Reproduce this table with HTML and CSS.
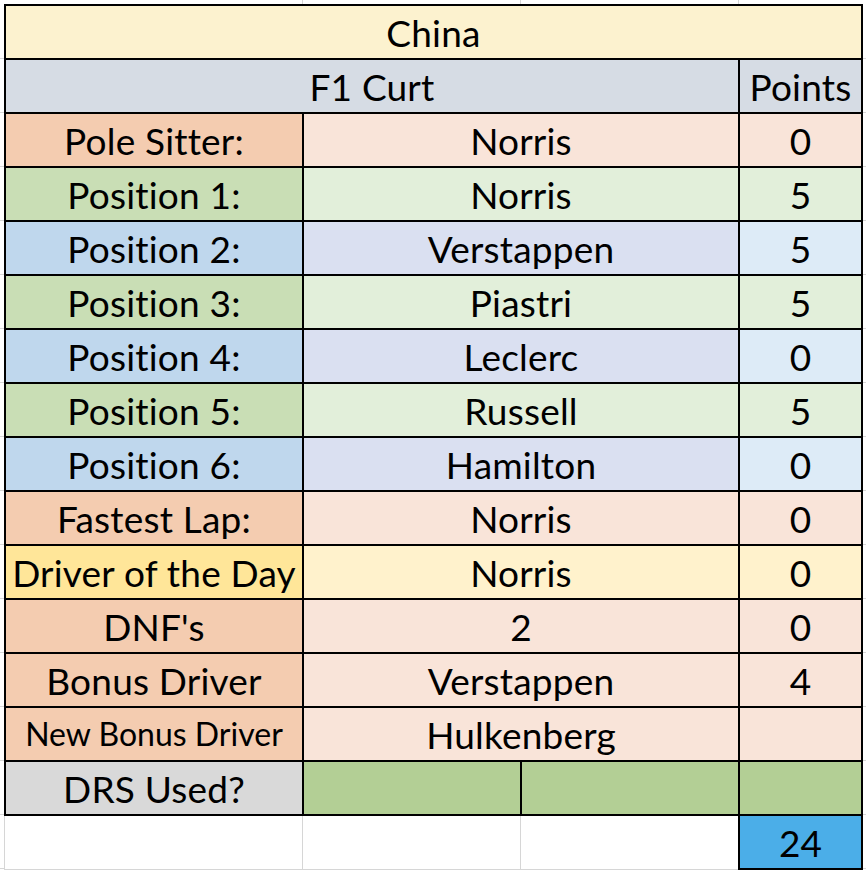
FILE: index.html
```html
<!DOCTYPE html>
<html lang="en">
<head>
<meta charset="utf-8">
<title>China - F1 Curt</title>
<link rel="stylesheet" href="styles.css">
</head>
<body>
<div class="sheet">
  <div class="board">
    <div class="cell title span4">China</div>
    <div class="cell head span3">F1 Curt</div>
    <div class="cell head">Points</div>

    <div class="cell peach-l">Pole Sitter:</div>
    <div class="cell peach-v span2">Norris</div>
    <div class="cell peach-v">0</div>

    <div class="cell green-l">Position 1:</div>
    <div class="cell green-v span2">Norris</div>
    <div class="cell green-v">5</div>

    <div class="cell blue-l">Position 2:</div>
    <div class="cell blue-v span2">Verstappen</div>
    <div class="cell blue-p">5</div>

    <div class="cell green-l">Position 3:</div>
    <div class="cell green-v span2">Piastri</div>
    <div class="cell green-v">5</div>

    <div class="cell blue-l">Position 4:</div>
    <div class="cell blue-v span2">Leclerc</div>
    <div class="cell blue-p">0</div>

    <div class="cell green-l">Position 5:</div>
    <div class="cell green-v span2">Russell</div>
    <div class="cell green-v">5</div>

    <div class="cell blue-l">Position 6:</div>
    <div class="cell blue-v span2">Hamilton</div>
    <div class="cell blue-p">0</div>

    <div class="cell peach-l">Fastest Lap:</div>
    <div class="cell peach-v span2">Norris</div>
    <div class="cell peach-v">0</div>

    <div class="cell gold-l">Driver of the Day</div>
    <div class="cell gold-v span2">Norris</div>
    <div class="cell gold-v">0</div>

    <div class="cell peach-l">DNF's</div>
    <div class="cell peach-v span2">2</div>
    <div class="cell peach-v">0</div>

    <div class="cell peach-l">Bonus Driver</div>
    <div class="cell peach-v span2">Verstappen</div>
    <div class="cell peach-v">4</div>

    <div class="cell peach-l small">New Bonus Driver</div>
    <div class="cell peach-v span2">Hulkenberg</div>
    <div class="cell peach-v"></div>

    <div class="cell gray-l">DRS Used?</div>
    <div class="cell drs"></div>
    <div class="cell drs"></div>
    <div class="cell drs"></div>
  </div>
  <div class="total-row">
    <div class="blank blank-a"></div>
    <div class="blank blank-b"></div>
    <div class="blank blank-c"></div>
    <div class="total">24</div>
  </div>
</div>
</body>
</html>
```

FILE: styles.css
```css
html, body {
  margin: 0;
  padding: 0;
}

body {
  width: 866px;
  height: 872px;
  background-color: #ffffff;
  background-image:
    linear-gradient(to right, transparent 0 302px, #d6d6d6 302px 303px, transparent 303px 520px, #d6d6d6 520px 521px, transparent 521px 738px, #d6d6d6 738px 739px, transparent 739px),
    repeating-linear-gradient(to bottom, transparent 0 53px, #d6d6d6 53px 54px);
  background-size: 100% 4px, 100% 100%;
  background-repeat: no-repeat, repeat;
  background-position: 0 0, 0 5px;
  font-family: Lato, "Open Sans", "Liberation Sans", sans-serif;
  font-variant-ligatures: none;
  color: #000;
  overflow: hidden;
}

.sheet {
  padding: 4px 0 0 4px;
}

.board {
  display: grid;
  grid-template-columns: 296px 216px 216px 121px;
  grid-auto-rows: 52px;
  gap: 2px;
  padding: 2px;
  background: #000;
  width: max-content;
}

.cell {
  display: flex;
  align-items: center;
  justify-content: center;
  font-size: 37px;
  letter-spacing: 0.2px;
  line-height: 1;
  white-space: nowrap;
  box-sizing: border-box;
  overflow: visible;
}

.span2 { grid-column: span 2; }
.span3 { grid-column: span 3; }
.span4 { grid-column: span 4; }

.small { font-size: 32px; letter-spacing: 0; }

.title { background: #fcf2cf; }
.head { background: #d6dce4; }

.peach-l { background: #f4ccb0; }
.peach-v { background: #f9e4d9; }

.green-l { background: #c9deb5; }
.green-v { background: #e2efda; }

.blue-l { background: #bfd7ed; }
.blue-v { background: #dae0f1; }
.blue-p { background: #ddebf7; }

.gold-l { background: #ffe699; }
.gold-v { background: #fff2cc; }

.gray-l { background: #d9d9d9; }
.drs { background: #b3cf95; }

.total-row {
  display: flex;
  height: 54px;
}

.blank {
  box-sizing: border-box;
  height: 54px;
  background: #fff;
  border-bottom: 1px solid #d6d6d6;
}

.blank-a {
  width: 299px;
  border-left: 1px solid #d6d6d6;
  border-right: 1px solid #d6d6d6;
}

.blank-b {
  width: 218px;
  border-right: 1px solid #d6d6d6;
}

.blank-c {
  width: 217px;
}

.total {
  box-sizing: border-box;
  width: 125px;
  height: 54px;
  border: 2px solid #000;
  border-top: none;
  background: #4baee8;
  display: flex;
  align-items: center;
  justify-content: center;
  font-size: 37px;
  line-height: 1;
}
```
